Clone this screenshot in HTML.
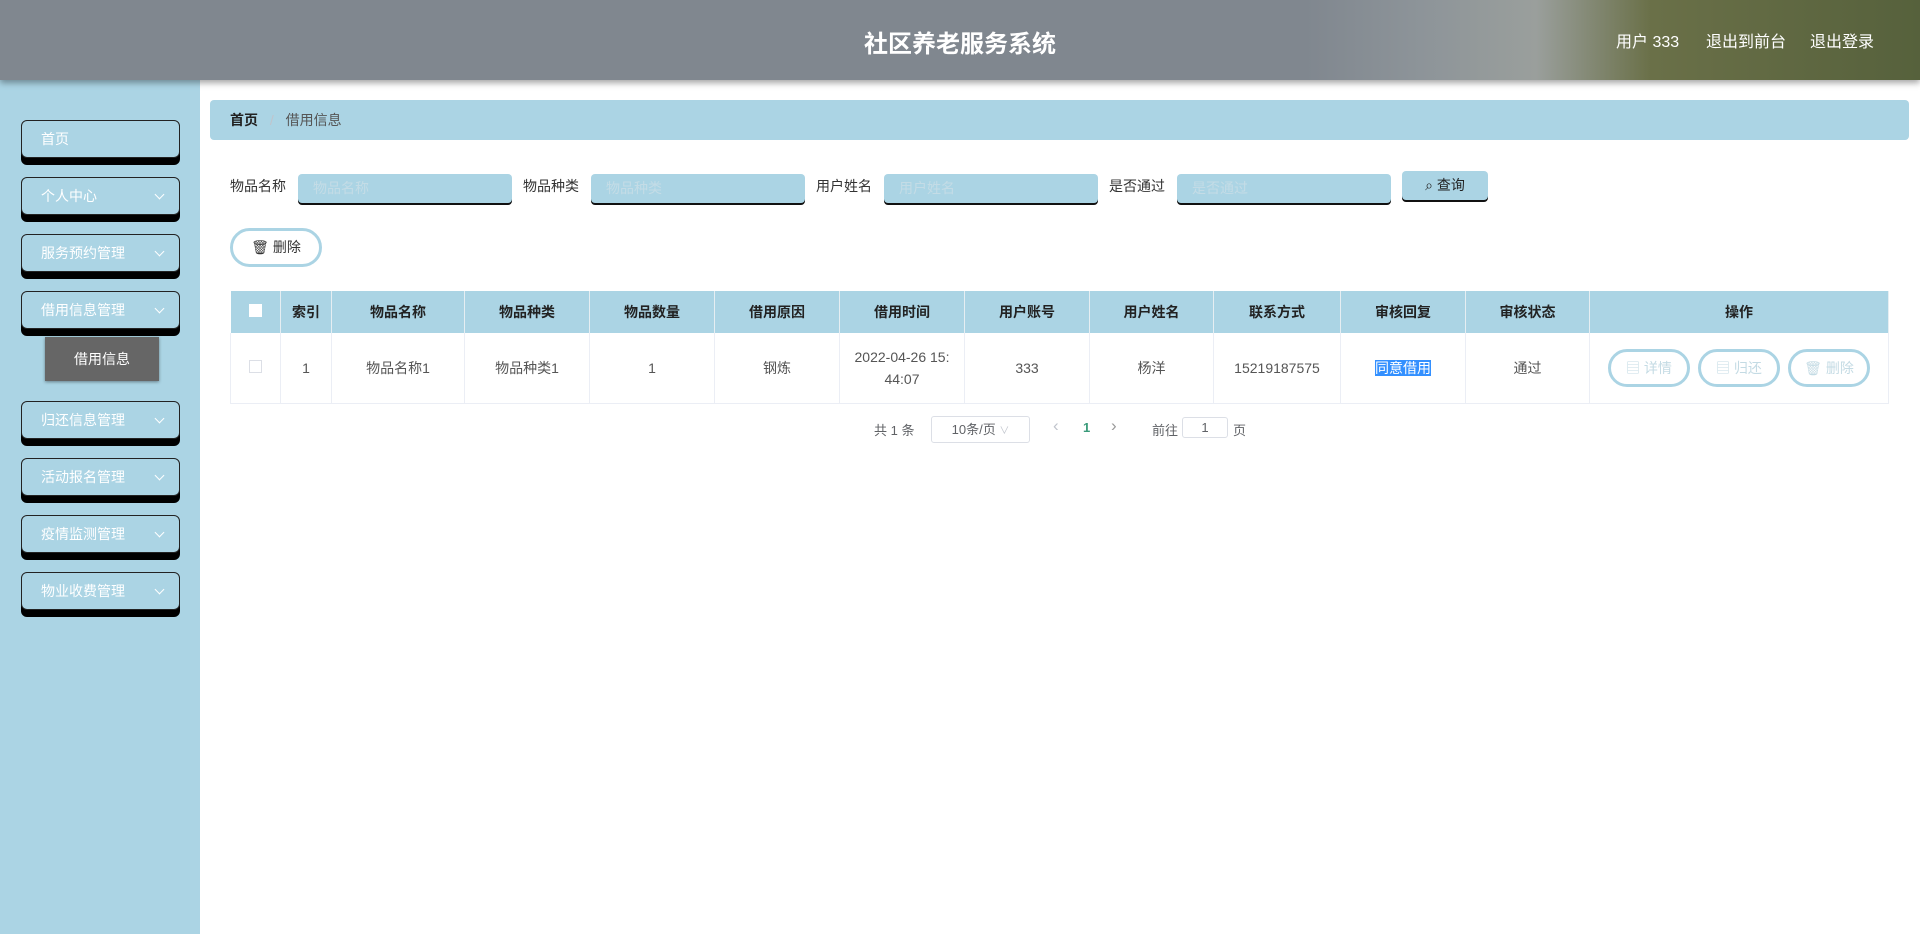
<!DOCTYPE html>
<html><head><meta charset="utf-8"><style>
*{margin:0;padding:0;box-sizing:border-box}
body{width:1920px;height:934px;background:#fff;font-family:"Liberation Sans","Noto Sans CJK SC",sans-serif;position:relative;overflow:hidden;color:#333}
.hd{position:absolute;left:0;top:0;width:1920px;height:80px;background:linear-gradient(90deg,#80878f 0%,#80878f 68%,#8d9499 74%,#9a9f9c 80%,#6a7048 86%,#56613c 100%);box-shadow:0 3px 6px rgba(0,0,0,.35);z-index:2}
.title{position:absolute;left:0;width:1920px;top:24px;text-align:center;color:#fff;font-size:24px;font-weight:bold}
.hl{position:absolute;top:28px;color:#fff;font-size:16px}
.sb{position:absolute;left:0;top:80px;width:200px;height:854px;background:#abd4e4}
.mi{position:absolute;left:21px;width:159px;height:38px;background:#abd4e4;border:1px solid #222;border-radius:6px;box-shadow:0 7px 0 #000;color:#fff;font-size:14px;line-height:36px;padding-left:19px}
.mi .ar{position:absolute;right:16px;top:13px;width:7px;height:7px;border-right:1px solid #fff;border-bottom:1px solid #fff;transform:rotate(45deg)}
.sub{position:absolute;left:45px;top:337px;width:114px;height:44px;background:#666;color:#fff;font-size:14px;text-align:center;line-height:44px;box-shadow:0 1px 3px rgba(0,0,0,.4)}
.bc{position:absolute;left:210px;top:100px;width:1699px;height:40px;background:#abd4e4;border-radius:4px;font-size:14px;line-height:40px;padding-left:20px}
.lb{position:absolute;top:176px;font-size:14px;color:#333}
.in{position:absolute;top:174px;width:214px;height:29px;background:#abd4e4;border-radius:4px;box-shadow:0 2px 0 #111;font-size:14px;color:#c4dce6;line-height:29px;padding-left:15px}
.qb{position:absolute;left:1402px;top:171px;width:86px;height:29px;background:#abd4e4;border-radius:4px;box-shadow:0 2px 0 #111;font-size:14px;line-height:29px;text-align:center;color:#222}
.db{position:absolute;left:230px;top:228px;width:92px;height:39px;border:3px solid #abd4e4;border-radius:20px;font-size:14px;line-height:33px;text-align:center;color:#333}
table{position:absolute;left:230px;top:291px;width:1659px;border-collapse:collapse;font-size:14px}
th{background:#abd4e4;height:42px;font-weight:bold;color:#222;border-right:1px solid #e6eef2}
td{height:70px;text-align:center;border-right:1px solid #ebeef5;border-bottom:1px solid #ebeef5;color:#555}
td:first-child{border-left:1px solid #ebeef5}
.ob{display:inline-block;width:82px;height:38px;border:3px solid #abd4e4;border-radius:19px;color:#c4dbe4;line-height:32px;margin:0 4px}
.pg{position:absolute;top:418px;font-size:13px;color:#606266}
</style></head><body>
<div class="hd"><div class="title">社区养老服务系统</div>
<div class="hl" style="left:1616px">用户 333</div><div class="hl" style="left:1706px">退出到前台</div><div class="hl" style="left:1810px">退出登录</div></div>
<div class="sb"></div>
<div class="mi" style="top:120px">首页</div>
<div class="mi" style="top:177px">个人中心<span class="ar"></span></div>
<div class="mi" style="top:234px">服务预约管理<span class="ar"></span></div>
<div class="mi" style="top:291px">借用信息管理<span class="ar"></span></div>
<div class="sub">借用信息</div>
<div class="mi" style="top:401px">归还信息管理<span class="ar"></span></div>
<div class="mi" style="top:458px">活动报名管理<span class="ar"></span></div>
<div class="mi" style="top:515px">疫情监测管理<span class="ar"></span></div>
<div class="mi" style="top:572px">物业收费管理<span class="ar"></span></div>
<div class="bc"><b style="color:#222">首页</b> <span style="color:#c0c4cc;margin:0 8px">/</span> <span style="color:#555">借用信息</span></div>
<div class="lb" style="left:230px">物品名称</div><div class="in" style="left:298px">物品名称</div>
<div class="lb" style="left:523px">物品种类</div><div class="in" style="left:591px">物品种类</div>
<div class="lb" style="left:816px">用户姓名</div><div class="in" style="left:884px">用户姓名</div>
<div class="lb" style="left:1109px">是否通过</div><div class="in" style="left:1177px">是否通过</div>
<div class="qb">&#x2315; 查询</div>
<div class="db">&#x1F5D1;&#xFE0E; 删除</div>
<table><tr>
<th style="width:50px"><span style="display:inline-block;width:13px;height:13px;background:#fff"></span></th><th style="width:51px">索引</th><th style="width:133px">物品名称</th><th style="width:125px">物品种类</th><th style="width:125px">物品数量</th><th style="width:125px">借用原因</th><th style="width:125px">借用时间</th><th style="width:125px">用户账号</th><th style="width:124px">用户姓名</th><th style="width:127px">联系方式</th><th style="width:125px">审核回复</th><th style="width:124px">审核状态</th><th>操作</th></tr>
<tr><td><span style="display:inline-block;width:13px;height:13px;border:1px solid #dcdfe6"></span></td><td>1</td><td>物品名称1</td><td>物品种类1</td><td>1</td><td>钢炼</td><td style="line-height:22px">2022-04-26 15:<br>44:07</td><td>333</td><td>杨洋</td><td>15219187575</td><td><span style="background:#3390ff;color:#fff">同意借用</span></td><td>通过</td>
<td><span class="ob">▤ 详情</span><span class="ob">▤ 归还</span><span class="ob">&#x1F5D1;&#xFE0E; 删除</span></td></tr></table>
<div class="pg" style="left:874px;top:420px">共 1 条</div>
<div class="pg" style="left:931px;top:416px;width:99px;height:27px;border:1px solid #dcdfe6;border-radius:3px;text-align:center;line-height:25px">10条/页 <span style="color:#c0c4cc;font-size:10px">∨</span></div>
<div class="pg" style="left:1053px;top:416px;color:#c0c4cc;font-size:17px">‹</div>
<div class="pg" style="left:1083px;top:420px;color:#3a9b7a;font-weight:bold">1</div>
<div class="pg" style="left:1111px;top:416px;color:#999;font-size:17px">›</div>
<div class="pg" style="left:1152px;top:420px">前往</div>
<div class="pg" style="left:1182px;top:417px;width:46px;height:21px;border:1px solid #dcdfe6;border-radius:3px;text-align:center;line-height:19px">1</div>
<div class="pg" style="left:1233px;top:420px">页</div>
</body></html>
